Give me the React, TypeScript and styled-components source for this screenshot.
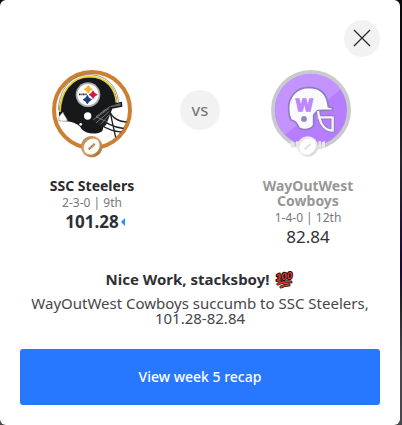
import React from "react";
import styled, { createGlobalStyle } from "styled-components";

const GlobalStyle = createGlobalStyle`
  *, *::before, *::after { box-sizing: border-box; }
  body {
    margin: 0;
    background: linear-gradient(#08080b 0, #101014 90px, #27272c 160px, #17092f 270px, #222225 300px, #48484c 360px, #48484c 100%);
    font-family: "Noto Sans", "Open Sans", sans-serif;
    color: #303034;
  }
  h2, p { margin: 0; }
`;

const Dialog = styled.main`
  margin-right: 2px;
  padding: 20px;
  background: #fff;
  border-radius: 6px;
  text-align: center;
`;

const Header = styled.header`
  display: flex;
  justify-content: flex-end;
`;

const CloseButton = styled.button`
  display: grid;
  place-items: center;
  width: 36px;
  height: 37px;
  padding: 0 0 2px;
  border: 0;
  border-radius: 50%;
  background: #f2f2f2;
  color: #2c2c30;
  cursor: pointer;
`;

const Matchup = styled.section`
  display: grid;
  grid-template-columns: 1fr 40px 1fr;
  column-gap: 16px;
  align-items: start;
  margin-top: 9px;
`;

const Team = styled.article`
  display: flex;
  flex-direction: column;
  align-items: center;
`;

const Avatar = styled.svg`
  display: block;
  width: 104px;
  height: 96px;
`;

const TeamName = styled.h2<{ $muted?: boolean }>`
  max-width: 104px;
  margin-top: 16px;
  font-size: 14px;
  line-height: 15px;
  font-weight: 700;
  color: ${(p) => (p.$muted ? "#979797" : "#2b2b2f")};
`;

const Standing = styled.p`
  font-size: 12px;
  line-height: 20px;
  color: #77777a;
`;

const Score = styled.p<{ $winner?: boolean }>`
  display: flex;
  align-items: center;
  gap: 2px;
  padding-left: ${(p) => (p.$winner ? "6px" : "0")};
  font-size: 17px;
  line-height: 18px;
  font-weight: ${(p) => (p.$winner ? 700 : 400)};
`;

const Versus = styled.div`
  display: grid;
  place-items: center;
  width: 40px;
  height: 40px;
  margin-top: 24px;
  border-radius: 50%;
  background: #f2f2f2;
  color: #727276;
  font-size: 17px;
  line-height: 20px;
`;

const Summary = styled.section`
  margin-top: 22px;
`;

const Headline = styled.h2`
  display: flex;
  align-items: center;
  justify-content: center;
  gap: 5px;
  font-size: 15px;
  line-height: 22px;
`;

const Message = styled.p`
  margin-top: 6px;
  font-size: 15px;
  line-height: 15px;
  color: #46464a;
`;

const RecapButton = styled.button`
  width: 100%;
  height: 56px;
  margin-top: 23px;
  padding: 0;
  border: 0;
  border-radius: 3px;
  background: #2878ff;
  color: #fff;
  font: 500 14px/20px "Noto Sans", "Open Sans", sans-serif;
  cursor: pointer;
`;

function SteelersAvatar() {
  return (
    <Avatar viewBox="-18 12 312 288" role="img" aria-label="SSC Steelers helmet">
      <defs>
        <clipPath id="steelClip"><circle cx="138" cy="144" r="110" /></clipPath>
        <linearGradient id="bronze" x1="0" y1="0" x2="1" y2="1">
          <stop offset="0" stopColor="#b87a3a" />
          <stop offset="0.45" stopColor="#d3a878" />
          <stop offset="1" stopColor="#9d6428" />
        </linearGradient>
      </defs>
      <circle cx="138" cy="144" r="114" fill="#fff" stroke="#cc7f31" strokeWidth="12" />
      <g clipPath="url(#steelClip)">
        <path d="M39 168C38 100 68 46 130 45C188 46 213 84 213 122L228 119L229 134L198 140L180 152L160 166L175 186L169 207C154 219 121 217 107 202C101 187 82 180 60 178L40 176Z" fill="#17181a" />
        <path d="M42 150C44 92 73 46 130 44C184 45 209 83 211 122" fill="none" stroke="#e5cf27" strokeWidth="5" />
        <path d="M37 145C39 89 69 39 130 38C187 39 215 80 217 120" fill="none" stroke="#606066" strokeWidth="2" />
        <path d="M39 164C44 159 48 153 51 151C54 161 62 167 64 176C56 179 47 177 38 176Z" fill="#fff" stroke="#96969a" strokeWidth="2" />
        <path d="M136 174L192 130L198 142L180 190L166 196Z" fill="#202124" />
        <path d="M170 149L192 134M150 164L178 143M142 173L190 139M150 183L190 148M162 189L190 158M150 164L184 180" fill="none" stroke="#9a9a9e" strokeWidth="2" />
        <path d="M191 137C189 158 207 181 256 181M174 178C196 192 222 201 254 200M160 183C182 204 207 210 245 212M191 142L199 181L209 226" fill="none" stroke="#202124" strokeWidth="4" />
        <path d="M193 132L224 123V131L193 136Z" fill="#606166" />
        <circle cx="126" cy="98" r="37" fill="#a8abb0" />
        <circle cx="126" cy="98" r="32" fill="#fff" />
        <path d="M127 70Q130 78 139 82Q130 85 127 94Q123 85 114 82Q123 79 127 70Z" fill="#f4b42a" stroke="#f4b42a" strokeWidth="2" />
        <path d="M141 86Q144 95 154 98Q144 101 141 110Q138 101 129 98Q138 95 141 86Z" fill="#d3143c" stroke="#d3143c" strokeWidth="2" />
        <path d="M124 100Q127 110 137 113Q127 117 124 126Q121 117 111 113Q121 110 124 100Z" fill="#173e80" stroke="#173e80" strokeWidth="2" />
        <path d="M99 97H123" stroke="#333337" strokeWidth="5" strokeDasharray="3 1" />
        <circle cx="125" cy="162" r="11" fill="#fff" />
        <circle cx="104" cy="187" r="4" fill="#fff" />
      </g>
      <circle cx="137" cy="254" r="32" fill="url(#bronze)" />
      <g transform="rotate(-43 137 254)">
        <path d="M111 254C115 225 159 225 163 254C159 283 115 283 111 254Z" fill="#fffdf8" />
        <path d="M125 254H149" stroke="#a4763f" strokeWidth="7" strokeDasharray="4 1" />
      </g>
    </Avatar>
  );
}

function CowboysAvatar() {
  return (
    <Avatar viewBox="-24 12 312 288" role="img" aria-label="WayOutWest Cowboys helmet">
      <defs>
        <clipPath id="cowboyClip"><circle cx="141" cy="144" r="109" /></clipPath>
        <linearGradient id="silver" x1="0" y1="0" x2="1" y2="1">
          <stop offset="0" stopColor="#e1e1e3" />
          <stop offset="0.5" stopColor="#f1f1f3" />
          <stop offset="1" stopColor="#cfcfd3" />
        </linearGradient>
      </defs>
      <circle cx="141" cy="144" r="114" fill="#b67eff" stroke="#c8cacd" strokeWidth="12" />
      <path clipPath="url(#cowboyClip)" d="M20 20H265L250 65L61 220L20 250Z" fill="#c394ff" />
      <path d="M74 143C72 103 99 76 136 76C173 77 190 101 193 134L206 138V144L161 146L149 159V188C144 203 116 206 105 198C98 184 96 177 81 174C77 167 74 159 74 143Z" fill="#faf9fd" stroke="#8d7dc1" strokeWidth="5" strokeLinejoin="round" />
      <path d="M162 147C166 174 173 204 206 206V166H161" fill="none" stroke="#8d7dc1" strokeWidth="13" strokeLinejoin="round" />
      <path d="M162 147C166 174 173 204 206 206V166H161" fill="none" stroke="#f5f3fd" strokeWidth="7" strokeLinejoin="round" />
      <circle cx="120" cy="171" r="8" fill="#8f83bd" stroke="#aaa0cd" strokeWidth="3" />
      <text x="121" y="146" textAnchor="middle" fontFamily="DejaVu Sans" fontSize="48" fontWeight="700" fill="#bd87fb" stroke="#bd87fb" strokeWidth="4">W</text>
      <path d="M79 238L91 242V258L79 255ZM174 241L183 236V256L174 260ZM96 238H107V261L96 257ZM163 238H172V258L163 263Z" fill="#e7e7ea" />
      <circle cx="131" cy="254" r="31" fill="url(#silver)" />
      <g transform="rotate(-43 131 254)">
        <path d="M105 254C109 225 153 225 157 254C153 283 109 283 105 254Z" fill="#fff" />
        <path d="M119 254H143" stroke="#dedee1" strokeWidth="7" strokeDasharray="4 1" />
      </g>
    </Avatar>
  );
}

function HundredEmoji() {
  return (
    <svg width="20" height="20" viewBox="0 0 20 20" role="img" aria-label="100">
      <g transform="rotate(-8 10 10)" fontFamily="Liberation Sans" fontStyle="italic" fontWeight="700" fontSize="10">
        <text x="2" y="11" fill="#e43325" stroke="#141414" strokeWidth="2" paintOrder="stroke" strokeLinejoin="round">100</text>
      </g>
      <path d="M4 15Q10 12 17 13M7 18Q10 16 15 16" fill="none" stroke="#141414" strokeWidth="3" strokeLinecap="round" />
      <path d="M4 15Q10 12 17 13M7 18Q10 16 15 16" fill="none" stroke="#e43325" strokeWidth="1.7" strokeLinecap="round" />
    </svg>
  );
}

export default function App() {
  return (
    <>
      <GlobalStyle />
      <Dialog>
        <Header>
          <CloseButton type="button" aria-label="Close">
            <svg width="18" height="18" viewBox="0 0 18 18" aria-hidden="true">
              <path d="M1 1L17 17M17 1L1 17" fill="none" stroke="currentColor" strokeWidth="1.3" />
            </svg>
          </CloseButton>
        </Header>
        <Matchup>
          <Team>
            <SteelersAvatar />
            <TeamName>SSC Steelers</TeamName>
            <Standing>2-3-0 | 9th</Standing>
            <Score $winner>
              101.28
              <svg width="4" height="8" viewBox="0 0 4 8" aria-hidden="true"><path d="M4 0V8L0 4Z" fill="#238cff" /></svg>
            </Score>
          </Team>
          <Versus>vs</Versus>
          <Team>
            <CowboysAvatar />
            <TeamName $muted>WayOutWest Cowboys</TeamName>
            <Standing>1-4-0 | 12th</Standing>
            <Score>82.84</Score>
          </Team>
        </Matchup>
        <Summary>
          <Headline>Nice Work, stacksboy! <HundredEmoji /></Headline>
          <Message>WayOutWest Cowboys succumb to SSC Steelers, 101.28-82.84</Message>
        </Summary>
        <RecapButton type="button">View week 5 recap</RecapButton>
      </Dialog>
    </>
  );
}
